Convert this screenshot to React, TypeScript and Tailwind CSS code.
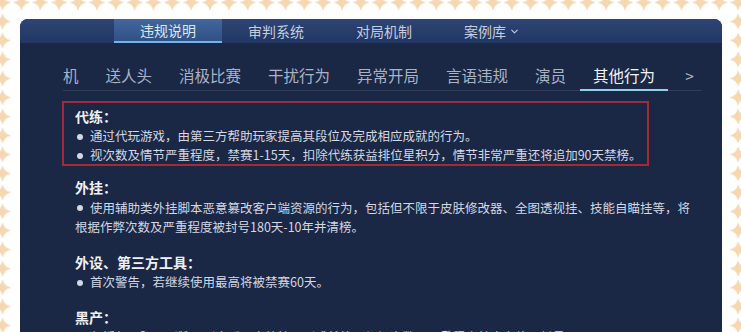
import { ChevronDown } from "lucide-react";

const navTabs = ["违规说明", "审判系统", "对局机制", "案例库"];
const subTabs = ["机", "送人头", "消极比赛", "干扰行为", "异常开局", "言语违规", "演员", "其他行为"];

function Bullet() {
  return <span className="relative -top-px ml-[2px] mr-[7px] inline-block h-[6px] w-[6px] rounded-full bg-[#d3d8e2] align-middle" />;
}

function Section({ title, children }: { title: string; children: React.ReactNode }) {
  return (
    <div>
      <div className="text-[14px] font-bold text-[#eef1f5]">{title}</div>
      <div className="text-[12.5px] text-[#d3d8e2]">{children}</div>
    </div>
  );
}

export default function App() {
  return (
    <div className="h-[332px] w-[741px] overflow-hidden bg-[#f5d7b2] bg-[radial-gradient(circle,#ffffff_9px,transparent_9.6px)] bg-size-[18.87px_19px] bg-position-[2.57px_2.5px] font-['Noto_Sans_CJK_SC',sans-serif]">
      <div className="mx-[12px] mt-[12px] h-[320px] bg-white pl-[8px] pr-[7px] pt-[7px]">
        <div className="h-full overflow-hidden rounded-t-[8px] bg-[#1a2745]">
          {/* top nav */}
          <div className="flex h-[24px] bg-linear-to-b from-[#2d4575] to-[#213663] pl-[94px]">
            {navTabs.map((t, i) => (
              <div
                key={t}
                className={
                  i === 0
                    ? "flex w-[108px] items-center justify-center border-b-2 border-[#6fb5e6] bg-linear-to-b from-[#42679d] to-[#2f5185] text-[14px] text-[#dae8f6]"
                    : "flex w-[108px] items-center justify-center text-[14px] text-[#c5cddd]"
                }
              >
                {t}
                {i === 3 && <ChevronDown size={11} strokeWidth={2.5} className="ml-[3px]" />}
              </div>
            ))}
          </div>

          {/* sub tabs */}
          <div className="ml-[43px] mr-[20px] flex items-center border-b border-[#313d58] pb-[4px] pt-[21px]">
            <div className="flex gap-[27px]">
              {subTabs.map((t, i) => (
                <div
                  key={t}
                  className={
                    i === 7
                      ? "relative text-[15.5px] leading-[22px] text-[#f1f4f8]"
                      : "text-[15.5px] leading-[22px] text-[#a9b3c6]"
                  }
                >
                  {t}
                  {i === 7 && <span className="absolute -left-[13px] -right-[13px] -bottom-[5px] h-[2px] bg-[#8dd3ea]" />}
                </div>
              ))}
            </div>
            <div className="ml-[30px] text-[15.5px] leading-[22px] text-[#b4bccb]">&gt;</div>
          </div>

          {/* highlighted box */}
          <div className="ml-[42px] mt-[10px] w-[587px] border-2 border-[#a52a38] pl-[11px] pt-[4px] leading-[19px]">
            <div className="text-[14px] font-bold text-[#eef1f5]">代练：</div>
            <div className="text-[12.5px] text-[#d3d8e2]">
              <Bullet />
              通过代玩游戏，由第三方帮助玩家提高其段位及完成相应成就的行为。
            </div>
            <div className="text-[12.5px] text-[#d3d8e2]">
              <Bullet />
              视次数及情节严重程度，禁赛1-15天，扣除代练获益排位星积分，情节非常严重还将追加90天禁榜。
            </div>
          </div>

          <div className="ml-[55px] mt-[12px] flex flex-col gap-[16px] leading-[19.5px]">
            <Section title="外挂：">
              <Bullet />
              使用辅助类外挂脚本恶意篡改客户端资源的行为，包括但不限于皮肤修改器、全图透视挂、技能自瞄挂等，将
              <br />
              根据作弊次数及严重程度被封号180天-10年并清榜。
            </Section>
            <Section title="外设、第三方工具：">
              <Bullet />
              首次警告，若继续使用最高将被禁赛60天。
            </Section>
            <Section title="黑产：">
              <Bullet />
              包括但不限于刷赞、刷金币、卖外挂、刷成就等，根据次数及严重程度禁止充值，封号
            </Section>
          </div>
        </div>
      </div>
    </div>
  );
}
